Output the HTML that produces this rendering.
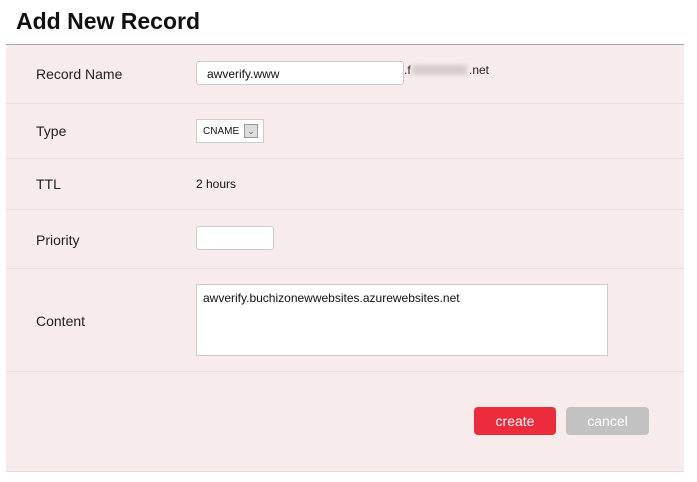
<!DOCTYPE html>
<html><head><style>
body{margin:0;background:#fff;font-family:"Liberation Sans",Arial,sans-serif;width:697px;height:482px;position:relative;overflow:hidden}
h1{position:absolute;left:16px;top:8px;margin:0;font-size:23px;font-weight:bold;color:#111}
.panel{position:absolute;left:6px;top:44px;width:678px;height:426px;background:#f7ebeb;border-top:1px solid #a8a8a8;border-bottom:1px solid #e2dcdc}
.line{position:absolute;left:6px;width:678px;height:1px;background:#ebdede}
.lbl{position:absolute;left:36px;font-size:14px;color:#222}
.a{position:absolute}
.inp{position:absolute;background:#fff;border:1px solid #ccc;box-sizing:border-box;font-size:12px;color:#111}
.btn{position:absolute;top:407px;height:28px;border-radius:4px;color:#fff;font-size:14px;text-align:center;line-height:28px}
</style></head><body>
<h1>Add New Record</h1>
<div class="panel"></div>
<div class="line" style="top:103px"></div>
<div class="line" style="top:158px"></div>
<div class="line" style="top:209px"></div>
<div class="line" style="top:268px"></div>
<div class="line" style="top:371px"></div>
<div class="lbl" style="top:66px">Record Name</div>
<div class="inp" style="left:196px;top:61px;width:208px;height:24px;border-radius:3px;padding:5px 10px">awverify.www</div>
<div class="a" style="left:404px;top:63px;font-size:12px;color:#222">.f</div>
<div class="a" style="left:412px;top:65px;width:55px;height:10px;background:#d6cccc;filter:blur(2px)"></div>
<div class="a" style="left:469px;top:63px;font-size:12px;color:#222">.net</div>
<div class="lbl" style="top:123px">Type</div>
<div class="inp" style="left:196px;top:119px;width:68px;height:24px;font-size:10px;padding:6px 6px">CNAME</div>
<div class="a" style="left:244px;top:124px;width:14px;height:14px;border:1px solid #999;background:#ddd;box-sizing:border-box;font-size:9px;color:#666;text-align:center;line-height:13px">&#8964;</div>
<div class="lbl" style="top:176px">TTL</div>
<div class="a" style="left:196px;top:177px;font-size:12px;color:#111">2 hours</div>
<div class="lbl" style="top:232px">Priority</div>
<div class="inp" style="left:196px;top:226px;width:78px;height:24px;border-radius:3px"></div>
<div class="lbl" style="top:313px">Content</div>
<div class="inp" style="left:196px;top:284px;width:412px;height:72px;padding:6px 6px;font-size:12px">awverify.buchizonewwebsites.azurewebsites.net</div>
<div class="btn" style="left:474px;width:82px;background:#ec2b3c">create</div>
<div class="btn" style="left:566px;width:83px;background:#c2c2c2">cancel</div>
</body></html>
